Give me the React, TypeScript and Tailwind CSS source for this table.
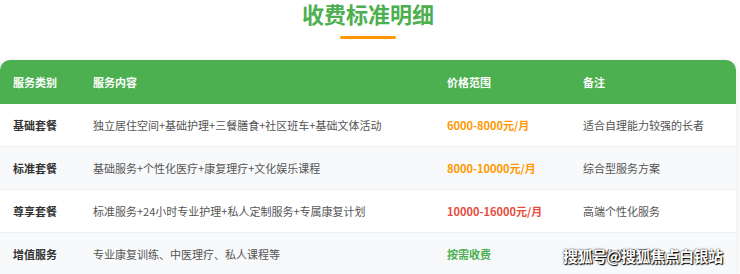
// 收费标准明细 — 标题 + 绿色表头的价格表
const rows = [
  {
    type: "基础套餐",
    content: "独立居住空间+基础护理+三餐膳食+社区班车+基础文体活动",
    price: "6000-8000元/月",
    priceColor: "text-[#ff9800]",
    note: "适合自理能力较强的长者",
  },
  {
    type: "标准套餐",
    content: "基础服务+个性化医疗+康复理疗+文化娱乐课程",
    price: "8000-10000元/月",
    priceColor: "text-[#ff9800]",
    note: "综合型服务方案",
  },
  {
    type: "尊享套餐",
    content: "标准服务+24小时专业护理+私人定制服务+专属康复计划",
    price: "10000-16000元/月",
    priceColor: "text-[#e74c3c]",
    note: "高端个性化服务",
  },
  {
    type: "增值服务",
    content: "专业康复训练、中医理疗、私人课程等",
    price: "按需收费",
    priceColor: "text-[#4caf50]",
    note: "个性化增值服务",
  },
];

const cols = "grid grid-cols-[80px_354px_136px_1fr]";

export default function App() {
  return (
    <div className="relative h-[274px] w-[740px] overflow-hidden bg-white font-['Noto_Sans_CJK_SC','Noto_Sans',sans-serif]">
      <div className="w-[736px]">
        <h2 className="text-center text-[22px] font-bold leading-[26px] text-[#4caf50]">收费标准明细</h2>
        <div className="mx-auto mt-[10px] h-[3px] w-[56px] rounded-full bg-[#ff9800]" />

        <div className="mt-[21px] overflow-hidden rounded-t-[10px] bg-white shadow-[0_2px_10px_rgba(0,0,0,0.1)]">
          <div className={`${cols} h-[44px] items-center bg-[#4caf50] text-[11px] font-bold text-white`}>
            <div className="pl-[13px]">服务类别</div>
            <div className="pl-[13px]">服务内容</div>
            <div className="pl-[13px]">价格范围</div>
            <div className="pl-[13px]">备注</div>
          </div>
          {rows.map((r, i) => (
            <div
              key={r.type}
              className={`${cols} h-[43px] items-center border-b border-[#eeeeee] text-[11px] ${i % 2 ? "bg-[#f8f9fa]" : "bg-white"}`}
            >
              <div className="pl-[13px] font-bold text-[#333]">{r.type}</div>
              <div className="pl-[13px] text-[#555]">{r.content}</div>
              <div className={`pl-[13px] font-bold ${r.priceColor}`}>{r.price}</div>
              <div className="pl-[13px] text-[#555]">{r.note}</div>
            </div>
          ))}
        </div>
      </div>

      {/* 水印 */}
      <div className="absolute left-[563px] top-[245px] text-[15px] font-bold tracking-[-0.5px] text-white [text-shadow:0_0_2px_#000,1px_1px_1px_#000]">
        搜狐号@搜狐焦点白银站
      </div>
    </div>
  );
}
